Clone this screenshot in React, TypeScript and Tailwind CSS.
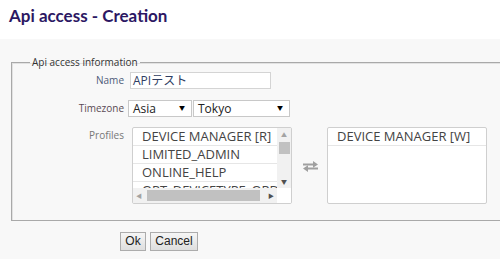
import React from 'react';

const sans = "font-['Open_Sans',_'Noto_Sans_CJK_JP',_sans-serif]";

const ProfileRow: React.FC<{ label: string }> = ({ label }) => (
  <div className="h-[18px] shrink-0 border-b border-[#e6e6e6] pl-[9px] text-[13px] leading-[17px] whitespace-nowrap text-[#444]">
    {label}
  </div>
);

const SwapIcon: React.FC = () => (
  <svg width="17" height="13" viewBox="0 0 17 13" className="text-[#a0a0a0]">
    <path d="M1 3.4 H11 V1 L16 4.4 L11 7.8 V5.4 H1 Z" fill="currentColor" />
    <path d="M16 7.6 H6 V5.2 L1 8.6 L6 12 V9.6 H16 Z" fill="currentColor" />
  </svg>
);

const App: React.FC = () => {
  const available = ['DEVICE MANAGER [R]', 'LIMITED_ADMIN', 'ONLINE_HELP', 'OPT_DEVICETYPE_ORDER'];

  return (
    <div className={`w-[500px] h-[259px] overflow-hidden bg-white ${sans}`}>
      <div className="h-[39px] pl-[9px] pt-[4px]">
        <h1 className="font-['Lato',_sans-serif] text-[17px] leading-[24px] font-bold text-[#2c1763]">
          Api access - Creation
        </h1>
      </div>

      <div className="h-[220px] bg-[#f8f8f8] pt-[16px]">
        <fieldset className="ml-[11px] w-[520px] border border-[#a9a9a9] shadow-[inset_1px_1px_0_#e2e2e2] pb-[16px]">
          <legend className="ml-[18px] px-[2px] text-[10px] leading-[15px] text-[#333]">Api access information</legend>

          <div className="mt-[2px] flex items-center">
            <div className="w-[112px] text-right text-[10px] text-[#4d5b78]">Name</div>
            <div className="ml-[6px] flex h-[17px] w-[141px] items-center border border-[#d4d4d4] bg-white px-[2px] text-[12px] text-[#2f3e63]">
              APIテスト
            </div>
          </div>

          <div className="mt-[11px] flex items-center">
            <div className="w-[112px] text-right text-[10px] text-[#5a4a55]">Timezone</div>
            <div className="ml-[4px] flex h-[17px] w-[64px] items-center justify-between border border-[#c8c8c8] bg-white pr-[6px] pl-[4px] text-[12px] text-[#222]">
              <span>Asia</span>
              <span className="text-[6px] text-black">▼</span>
            </div>
            <div className="ml-[1px] flex h-[17px] w-[97px] items-center justify-between border border-[#c8c8c8] bg-white pr-[6px] pl-[4px] text-[12px] text-[#222]">
              <span>Tokyo</span>
              <span className="text-[6px] text-black">▼</span>
            </div>
          </div>

          <div className="mt-[10px] flex items-start">
            <div className="w-[112px] pt-[1px] text-right text-[10px] leading-[14px] text-[#777]">Profiles</div>
            <div className="ml-[8px] flex h-[77px] w-[160px] flex-col overflow-hidden rounded-[2px] border border-[#cfcfcf] bg-white">
              <div className="flex h-[60px]">
                <div className="flex flex-1 flex-col overflow-hidden">
                  {available.map((p) => (
                    <ProfileRow key={p} label={p} />
                  ))}
                </div>
                <div className="flex w-[14px] flex-col items-center bg-[#f1f1f1]">
                  <span className="mt-[4px] text-[6px] leading-[6px] text-[#a3a3a3]">▲</span>
                  <div className="mt-[4px] h-[12px] w-[11px] bg-[#c1c1c1]" />
                  <span className="mt-[25px] text-[6px] leading-[6px] text-[#505050]">▼</span>
                </div>
              </div>
              <div className="flex h-[15px]">
                <div className="flex flex-1 items-center bg-[#f1f1f1] px-[3px]">
                  <span className="text-[6px] leading-[6px] text-[#a3a3a3]">◀</span>
                  <div className="ml-[5px] h-[11px] w-[113px] bg-[#c1c1c1]" />
                  <span className="ml-auto text-[6px] leading-[6px] text-[#505050]">▶</span>
                </div>
                <div className="w-[14px] bg-white" />
              </div>
            </div>

            <div className="mt-[33px] ml-[10px]">
              <SwapIcon />
            </div>

            <div className="ml-[8px] h-[77px] w-[160px] overflow-hidden rounded-[2px] border border-[#cfcfcf] bg-white">
              <ProfileRow label="DEVICE MANAGER [W]" />
            </div>
          </div>
        </fieldset>

        <div className="mt-[11px] flex pl-[120px] font-['Liberation_Sans',_Arial,_sans-serif]">
          <button className="h-[19px] w-[26px] border border-[#acacac] bg-gradient-to-b from-[#f6f6f6] to-[#dedede] text-[12px] leading-[17px] text-[#222]">
            Ok
          </button>
          <button className="ml-[4px] h-[19px] w-[48px] border border-[#acacac] bg-gradient-to-b from-[#f6f6f6] to-[#dedede] text-[12px] leading-[17px] text-[#222]">
            Cancel
          </button>
        </div>
      </div>
    </div>
  );
};

export default App;
